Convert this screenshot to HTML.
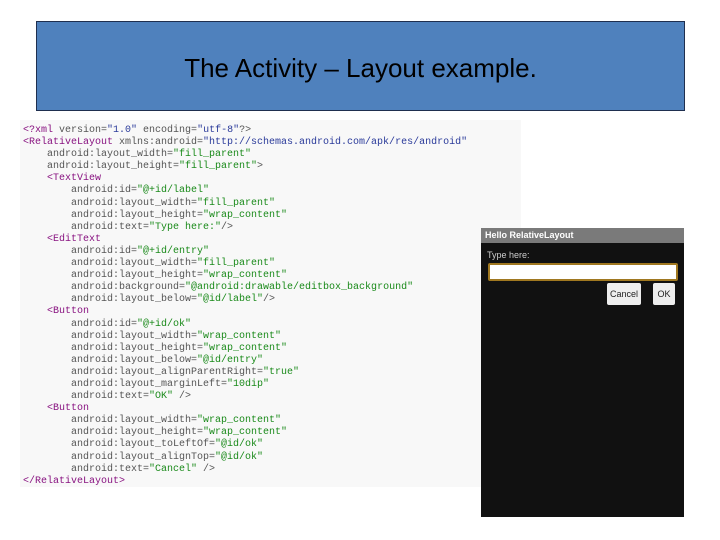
<!DOCTYPE html>
<html><head><style>
body{margin:0;width:720px;height:540px;background:#fff;position:relative;overflow:hidden;font-family:"Liberation Sans",sans-serif}
.title{position:absolute;left:36px;top:21px;width:647px;height:88px;background:#4f81bd;border:1px solid #1f2f4f;text-align:center;line-height:92px;font-size:26px;color:#000}
.code{position:absolute;left:20px;top:120px;width:501px;height:367px;background:#f8f8f8;font-family:"Liberation Mono",monospace;font-size:10px;line-height:12.1px;color:#555;white-space:pre;padding-top:5px;padding-left:3px;box-sizing:border-box}
.t{color:#881280}.v{color:#1a8a1a}.s{color:#2a3a9a}
.ph{position:absolute;left:481px;top:228px;width:203px;height:289px;background:#111}
.bar{height:15px;background:#7a7a7a;color:#fff;font-size:9px;font-weight:bold;line-height:15px;padding-left:4px}
.lbl{position:absolute;left:6px;top:22px;color:#ccc;font-size:9px}
.ed{position:absolute;left:7px;top:35px;width:186px;height:14px;background:#fff;border:2px solid #a07820;border-radius:2px}
.btn{position:absolute;top:55px;height:22px;background:#eee;color:#222;font-size:9px;line-height:22px;text-align:center;border-radius:2px}
</style></head><body>
<div class="title">The Activity – Layout example.</div>
<div class="code"><span class="t">&lt;?xml</span> version=<span class="s">"1.0"</span> encoding=<span class="s">"utf-8"</span>?&gt;
<span class="t">&lt;RelativeLayout</span> xmlns:android=<span class="s">"http://schemas.android.com/apk/res/android"</span>
    android:layout_width=<span class="v">"fill_parent"</span>
    android:layout_height=<span class="v">"fill_parent"</span>&gt;
    <span class="t">&lt;TextView</span>
        android:id=<span class="v">"@+id/label"</span>
        android:layout_width=<span class="v">"fill_parent"</span>
        android:layout_height=<span class="v">"wrap_content"</span>
        android:text=<span class="v">"Type here:"</span>/&gt;
    <span class="t">&lt;EditText</span>
        android:id=<span class="v">"@+id/entry"</span>
        android:layout_width=<span class="v">"fill_parent"</span>
        android:layout_height=<span class="v">"wrap_content"</span>
        android:background=<span class="v">"@android:drawable/editbox_background"</span>
        android:layout_below=<span class="v">"@id/label"</span>/&gt;
    <span class="t">&lt;Button</span>
        android:id=<span class="v">"@+id/ok"</span>
        android:layout_width=<span class="v">"wrap_content"</span>
        android:layout_height=<span class="v">"wrap_content"</span>
        android:layout_below=<span class="v">"@id/entry"</span>
        android:layout_alignParentRight=<span class="v">"true"</span>
        android:layout_marginLeft=<span class="v">"10dip"</span>
        android:text=<span class="v">"OK"</span> /&gt;
    <span class="t">&lt;Button</span>
        android:layout_width=<span class="v">"wrap_content"</span>
        android:layout_height=<span class="v">"wrap_content"</span>
        android:layout_toLeftOf=<span class="v">"@id/ok"</span>
        android:layout_alignTop=<span class="v">"@id/ok"</span>
        android:text=<span class="v">"Cancel"</span> /&gt;
<span class="t">&lt;/RelativeLayout&gt;</span></div>
<div class="ph">
<div class="bar">Hello RelativeLayout</div>
<div class="lbl">Type here:</div>
<div class="ed"></div>
<div class="btn" style="left:126px;width:34px">Cancel</div>
<div class="btn" style="left:172px;width:22px">OK</div>
</div>
</body></html>
